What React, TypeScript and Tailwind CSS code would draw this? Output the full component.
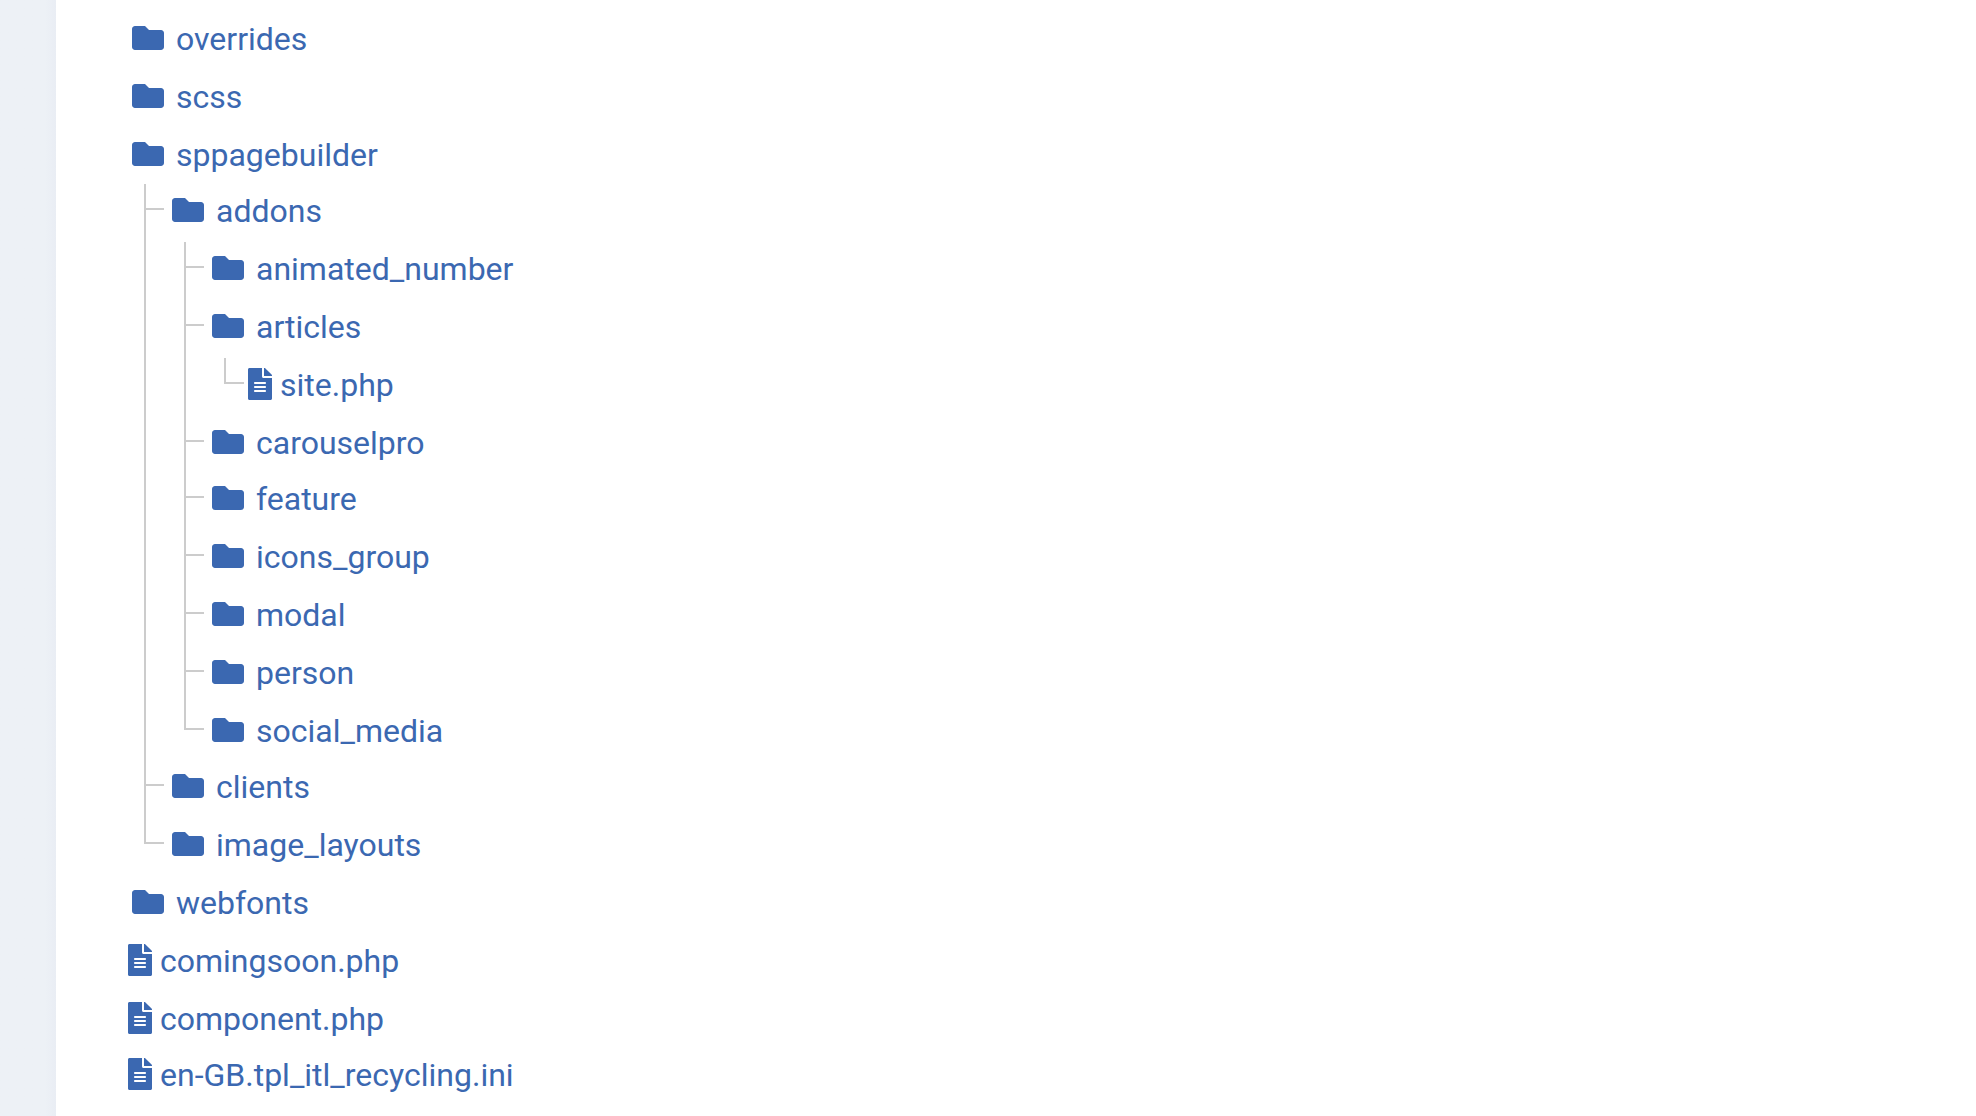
import { FaFolder, FaFileAlt } from 'react-icons/fa';

type Node = {
  name: string;
  file?: boolean;
  // rows snap to 58px, every fifth one to 56px
  short?: boolean;
  children?: Node[];
};

const tree: Node[] = [
  { name: 'overrides' },
  { name: 'scss' },
  {
    name: 'sppagebuilder',
    short: true,
    children: [
      {
        name: 'addons',
        children: [
          { name: 'animated_number' },
          { name: 'articles', children: [{ name: 'site.php', file: true }] },
          { name: 'carouselpro', short: true },
          { name: 'feature' },
          { name: 'icons_group' },
          { name: 'modal' },
          { name: 'person' },
          { name: 'social_media', short: true },
        ],
      },
      { name: 'clients' },
      { name: 'image_layouts' },
    ],
  },
  { name: 'webfonts' },
  { name: 'comingsoon.php', file: true },
  { name: 'component.php', file: true, short: true },
  { name: 'en-GB.tpl_itl_recycling.ini', file: true },
];

function Item({ node, nested, last }: { node: Node; nested: boolean; last: boolean }) {
  return (
    <li className="relative">
      {nested && (
        <>
          <span
            className={`absolute left-[-28px] top-[3px] w-[2px] bg-[#cccccc] ${last ? 'h-[26px]' : 'bottom-[-3px]'}`}
          />
          <span className="absolute left-[-28px] top-[27px] h-[2px] w-[20px] bg-[#cccccc]" />
        </>
      )}
      <div className={`flex h-[58px] items-center ${node.short ? 'mb-[-2px]' : ''}`}>
        {node.file ? (
          <FaFileAlt className="ml-[-8px] mr-[5px] shrink-0" size={32} />
        ) : (
          <FaFolder className="mr-[13px] shrink-0" size={32} />
        )}
        <span className="ml-[-1px] translate-y-px">{node.name}</span>
      </div>
      {node.children && (
        <ul className="pl-[40px]">
          {node.children.map((child, i) => (
            <Item key={child.name} node={child} nested last={i === node.children!.length - 1} />
          ))}
        </ul>
      )}
    </li>
  );
}

export default function App() {
  return (
    <div className="flex h-[1116px] overflow-hidden bg-white font-['Roboto',sans-serif] text-[32px] leading-[58px] text-[#3b68b1]">
      <aside className="w-[56px] shrink-0 bg-linear-to-r from-[#edf1f6] from-80% to-[#e9edf4]" />
      <main className="flex-1 pl-[76px] pt-[9px]">
        <ul>
          {tree.map((node, i) => (
            <Item key={node.name} node={node} nested={false} last={i === tree.length - 1} />
          ))}
        </ul>
      </main>
    </div>
  );
}
